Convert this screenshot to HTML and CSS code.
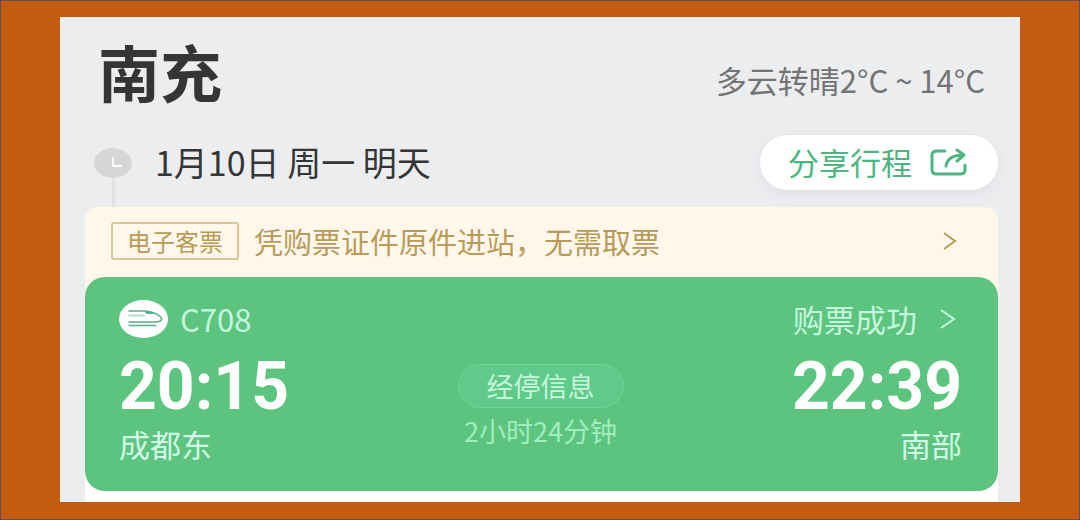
FILE: index.html
```html
<!DOCTYPE html>
<html lang="zh-CN">
<head>
    <meta charset="UTF-8">
    <meta name="viewport" content="width=device-width, initial-scale=1.0">
    <title>南充 行程</title>
    <link rel="stylesheet" href="styles.css">
</head>
<body>
    <main class="panel">
        <header class="city">
            <h1>南充</h1>
            <span class="weather">多云转晴2°C ~ 14°C</span>
        </header>

        <div class="day">
            <div class="timeline">
                <svg width="38" height="30" viewBox="0 0 38 30" aria-hidden="true">
                    <ellipse cx="19" cy="15" rx="19" ry="15" fill="#d7d5d6"/>
                    <path d="M19 9v9h9" fill="none" stroke="#fff" stroke-width="2"/>
                </svg>
                <div class="timeline-line"></div>
            </div>
            <div class="date">1月10日 周一 明天</div>
            <button type="button" class="share">
                分享行程
                <svg width="37" height="28" viewBox="0 0 37 28" fill="none" stroke="#4db57f" stroke-width="3" stroke-linecap="round" stroke-linejoin="round" aria-hidden="true">
                    <path d="M15 3H7Q2 3 2 7v15q0 4 5 4h23q5 0 5-4v-5"/>
                    <path d="M16 18c1-7 6-11 18-11M27 2l7 5-7 6"/>
                </svg>
            </button>
        </div>

        <section class="trip">
            <a href="#" class="notice">
                <span class="tag">电子客票</span>
                <span class="notice-text">凭购票证件原件进站，无需取票</span>
                <svg width="14" height="18" viewBox="0 0 14 18" fill="none" stroke="#b89b58" stroke-width="2" aria-hidden="true">
                    <path d="M1 1l11 8-11 8"/>
                </svg>
            </a>

            <div class="ticket">
                <div class="ticket-head">
                    <svg width="49" height="38" viewBox="0 0 98 76" aria-hidden="true">
                        <ellipse cx="49" cy="38" rx="49" ry="38" fill="#fff"/>
                        <g fill="none" stroke="#5aad87" stroke-width="3">
                            <path d="M19 22h34c15 2 27 7 32 14 2 5-4 8-12 8H19"/>
                            <path d="M19 31h32" stroke="#b5dcca" stroke-width="4"/>
                            <path d="M19 51h56"/>
                        </g>
                        <path d="M51 23l4 5h16l-7-4z" fill="#5aad87"/>
                    </svg>
                    <span class="train">C708</span>
                    <a href="#" class="status">
                        购票成功
                        <svg width="16" height="20" viewBox="0 0 16 20" fill="none" stroke="#c4f8dc" stroke-width="2" aria-hidden="true">
                            <path d="M1 1l13 9-13 9"/>
                        </svg>
                    </a>
                </div>
                <div class="route">
                    <div class="stop">
                        <div class="time">20:15</div>
                        <div class="station">成都东</div>
                    </div>
                    <div class="middle">
                        <button type="button" class="via">经停信息</button>
                        <div class="duration">2小时24分钟</div>
                    </div>
                    <div class="stop stop-end">
                        <div class="time">22:39</div>
                        <div class="station">南部</div>
                    </div>
                </div>
            </div>
        </section>
    </main>
</body>
</html>
```

FILE: styles.css
```css
* {
    box-sizing: border-box;
}
body {
    margin: 0;
    min-height: 100vh;
    padding: 16px 59px 17px;
    border: 1px solid #6b4a4c;
    background-color: #c55a11;
    font-family: "Noto Sans CJK SC", sans-serif;
    color: #333537;
}
a {
    text-decoration: none;
}
button {
    font-family: inherit;
    cursor: pointer;
}
svg {
    display: block;
    flex: none;
}
.panel {
    background-color: #ecedef;
    padding: 22px 22px 0 25px;
}
.city {
    display: flex;
    align-items: center;
    justify-content: space-between;
    padding: 0 13px;
    margin-bottom: 32px;
}
h1 {
    margin: 0;
    font-size: 62px;
    line-height: 64px;
    font-weight: bold;
}
.weather {
    padding-top: 18px;
    font-size: 31px;
    line-height: 40px;
    color: #727476;
}
.day {
    display: flex;
    padding-left: 9px;
}
.timeline {
    display: flex;
    flex-direction: column;
    align-items: center;
    padding-top: 13px;
    margin-right: 23px;
}
.timeline-line {
    flex: 1;
    width: 3px;
    background-color: #e0e0e2;
}
.date {
    flex: 1;
    font-size: 34px;
    line-height: 54px;
}
.share {
    display: flex;
    align-items: center;
    gap: 18px;
    height: 55px;
    margin-bottom: 17px;
    padding: 0 31px 2px 28px;
    border: none;
    border-radius: 28px;
    background-color: #fff;
    box-shadow: 0 4px 14px rgba(80, 90, 120, 0.08);
    color: #4db57f;
    font-size: 31px;
}
.trip {
    padding-bottom: 11px;
    border-radius: 14px 14px 0 0;
    background-color: #fff;
}
.notice {
    display: flex;
    align-items: center;
    gap: 15px;
    padding: 15px 41px 37px 26px;
    border-radius: 14px 14px 0 0;
    background-color: #fef7ea;
    color: #b89b58;
}
.tag {
    padding: 0 14px;
    border: 2px solid #d8c69b;
    border-radius: 3px;
    font-size: 24px;
    line-height: 34px;
}
.notice-text {
    flex: 1;
    font-size: 29px;
    line-height: 38px;
}
.ticket {
    margin-top: -20px;
    padding: 21px 36px 27px 34px;
    border-radius: 20px;
    background-color: #5cc47f;
    color: #c4f8dc;
}
.ticket-head {
    display: flex;
    align-items: center;
    height: 42px;
}
.train {
    flex: 1;
    margin-left: 12px;
    font-size: 31px;
    line-height: 40px;
}
.status {
    display: flex;
    align-items: center;
    gap: 23px;
    padding-right: 6px;
    color: inherit;
    font-size: 31px;
    line-height: 40px;
}
.route {
    display: flex;
    justify-content: space-between;
}
.time {
    padding-top: 10px;
    color: #fff;
    font-family: Roboto, sans-serif;
    font-size: 66px;
    line-height: 74px;
    font-weight: bold;
}
.station {
    color: #d2fbe5;
    font-size: 31px;
    line-height: 40px;
}
.stop-end {
    text-align: right;
}
.middle {
    padding-top: 24px;
    text-align: center;
}
.via {
    height: 44px;
    padding: 0 28px;
    border: 1px solid #72d397;
    border-radius: 22px;
    background-color: #60ca8a;
    color: #c4f8dc;
    font-size: 27px;
    line-height: 40px;
}
.duration {
    color: #a0edbd;
    font-size: 27px;
    line-height: 46px;
}
```
